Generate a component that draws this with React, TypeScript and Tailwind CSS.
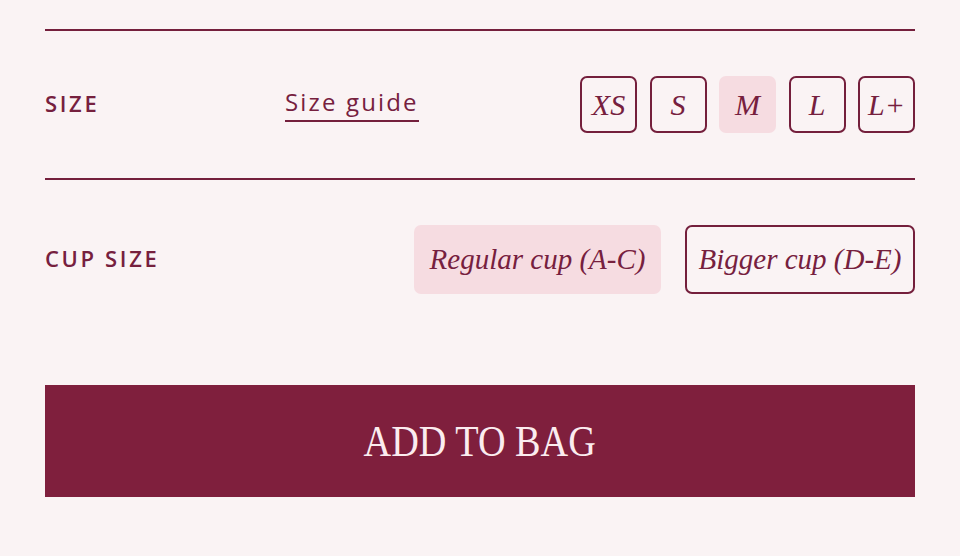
import { useState } from "react";

const sizes = ["XS", "S", "M", "L", "L+"];
const cups = [
  { label: "Regular cup (A-C)", width: "w-[247px]" },
  { label: "Bigger cup (D-E)", width: "w-[230px]" },
];

function App() {
  const [size, setSize] = useState("M");
  const [cup, setCup] = useState(cups[0].label);

  return (
    <div className="min-h-screen w-full bg-[#faf3f4] px-[45px] pt-[29px] text-[#76203e]">
      <div className="border-t-2 border-[#741f3c]" />

      {/* size row */}
      <div className="flex items-center py-[45px]">
        <div className="-mt-[4px] w-[240px] font-['Open_Sans',sans-serif] text-[22px] font-semibold leading-none tracking-[0.12em]">
          SIZE
        </div>
        <a
          href="#"
          className="mt-[1px] border-b-2 border-[#741f3c] pb-[4px] font-['Open_Sans',sans-serif] text-[24px] leading-[28px] tracking-[0.09em]"
        >
          Size guide
        </a>
        <div className="ml-auto flex gap-[12.5px]">
          {sizes.map((s) => (
            <button
              key={s}
              onClick={() => setSize(s)}
              className={
                "flex h-[57px] w-[57px] items-center justify-center rounded-[7px] border-2 font-['Liberation_Serif',serif] text-[30px] italic " +
                (size === s
                  ? "border-transparent bg-[#f6dce1]"
                  : "border-[#741f3c] bg-transparent")
              }
            >
              {s}
            </button>
          ))}
        </div>
      </div>

      <div className="border-t-2 border-[#741f3c]" />

      {/* cup row */}
      <div className="flex items-center pt-[45px]">
        <div className="-mt-[3px] font-['Open_Sans',sans-serif] text-[22px] font-semibold leading-none tracking-[0.12em]">
          CUP SIZE
        </div>
        <div className="ml-auto flex gap-[24px]">
          {cups.map((c) => (
            <button
              key={c.label}
              onClick={() => setCup(c.label)}
              className={
                "flex h-[69px] items-center justify-center whitespace-nowrap rounded-[7px] border-2 font-['Liberation_Serif',serif] text-[29px] italic " +
                c.width +
                " " +
                (cup === c.label
                  ? "border-transparent bg-[#f6dce1]"
                  : "border-[#741f3c] bg-transparent")
              }
            >
              {c.label}
            </button>
          ))}
        </div>
      </div>

      <button className="mt-[91px] flex h-[112px] w-full items-center justify-center bg-[#7f1f3d] font-['Liberation_Serif',serif] text-[#fbecef]">
        <span className="inline-block scale-x-[0.85] text-[45px] leading-none">ADD TO BAG</span>
      </button>
    </div>
  );
}

export default App;
